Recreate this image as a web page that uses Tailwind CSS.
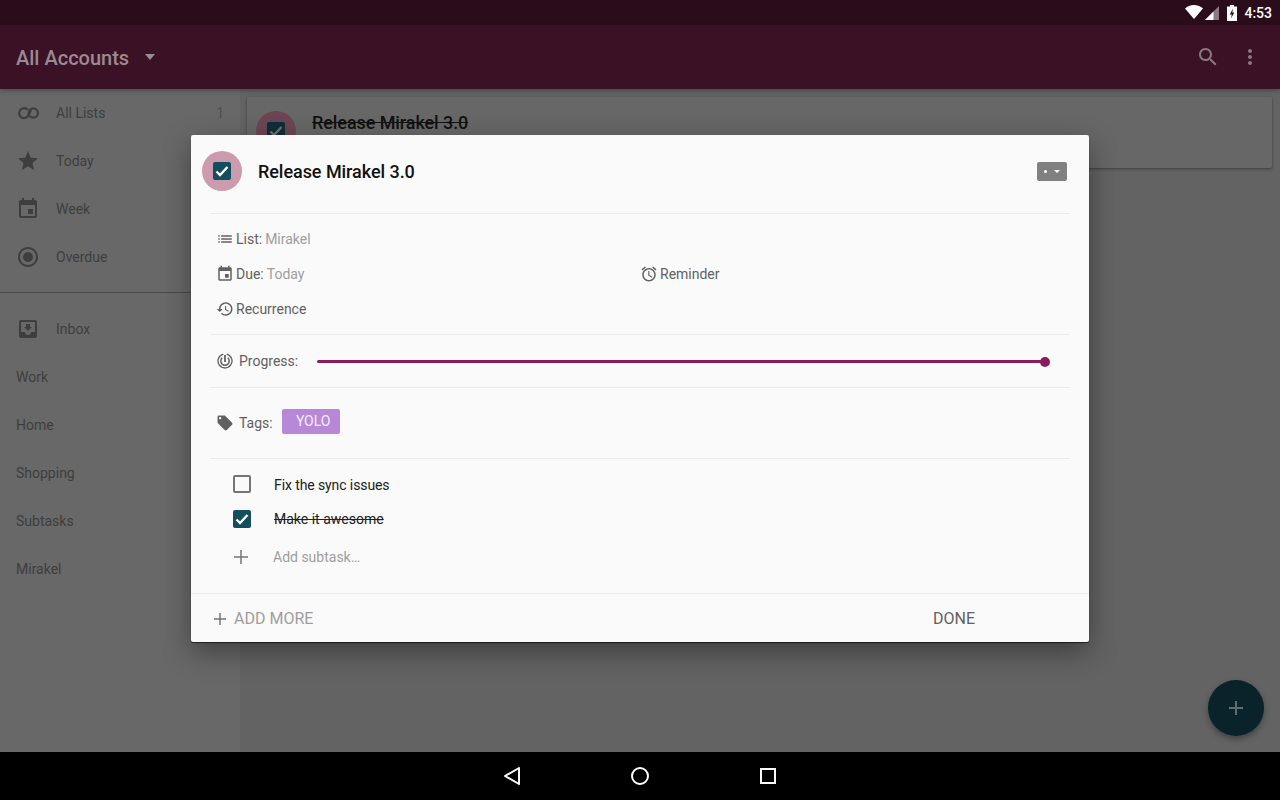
<!DOCTYPE html>
<html>
<head>
<meta charset="utf-8">
<script src="https://cdn.jsdelivr.net/npm/@tailwindcss/browser@4"></script>
</head>
<body class="font-['Roboto',sans-serif]">
<div class="relative w-[1280px] h-[800px] overflow-hidden flex flex-col bg-[#636363]">

  <!-- status bar -->
  <div class="h-[25px] bg-[#2b0c1b] flex items-center justify-end text-white">
    <svg class="w-[18px] h-[14px] mr-[2px] -mt-[1px]" viewBox="0 0 18 14"><path d="M0 3.500C2.300 1.300 5.500 0 9 0s6.700 1.300 9 3.500L9 14z" fill="#fff"/></svg>
    <svg class="w-[14px] h-[14px]" viewBox="0 0 14 14"><path d="M14 0v14H0z" fill="#8b7880"/><path d="M8.500 5.500V14H0z" fill="#fff"/></svg>
    <svg class="w-[10px] h-[16px] ml-[8px]" viewBox="0 0 10 16"><path d="M3 0h4v1.500h3V16H0V1.500h3z" fill="#fff"/><path d="M6 3.500L2.800 9.500h2L4 13.500l3.300-6h-2z" fill="#2b0c1b"/></svg>
    <span class="ml-[7px] mr-[8px] text-[14px] font-medium leading-none">4:53</span>
  </div>

  <!-- app bar -->
  <div class="h-[64px] bg-[#3b1225] flex items-center pl-4 pr-[18px] shadow-[0_2px_4px_rgba(0,0,0,0.25)] z-10">
    <span class="text-[20px] font-medium text-[#9c8a92] mt-[2px]">All Accounts</span>
    <svg class="w-[10px] h-[6px] ml-[16px] -mt-[1px]" viewBox="0 0 10 6"><path d="M0 0h10L5 6z" fill="#9c8a92"/></svg>
    <svg class="w-6 h-6 ml-auto mr-[18px]" viewBox="0 0 24 24"><path fill="#8b7880" d="M15.500 14h-.79l-.28-.27C15.410 12.590 16 11.110 16 9.500 16 5.910 13.090 3 9.500 3S3 5.910 3 9.500 5.910 16 9.500 16c1.610 0 3.090-.59 4.230-1.570l.27.28v.79l5 4.990L20.490 19l-4.990-5zm-6 0C7.010 14 5 11.990 5 9.500S7.010 5 9.500 5 14 7.010 14 9.500 11.990 14 9.500 14z"/></svg>
    <svg class="w-6 h-6" viewBox="0 0 24 24"><path fill="#8b7880" d="M12 8c1.100 0 2-.9 2-2s-.9-2-2-2-2 .9-2 2 .9 2 2 2zm0 2c-1.100 0-2 .9-2 2s.9 2 2 2 2-.9 2-2-.9-2-2-2zm0 6c-1.100 0-2 .9-2 2s.9 2 2 2 2-.9 2-2-.9-2-2-2z"/></svg>
  </div>

  <div class="flex-1 flex min-h-0">
    <!-- sidebar -->
    <div class="w-[240px] bg-[#686868] text-[14px] text-[#3e3e3e]">
      <div class="h-[48px] flex items-center pl-4 pr-4">
        <svg class="w-6 h-6 shrink-0 mr-4" viewBox="0 0 24 24" fill="none" stroke="#3e3e3e" stroke-width="2.200"><path d="M11.800 8.800A5 5 0 1 0 11.500 15.800L15 9"/><circle cx="17.300" cy="12" r="4.600"/></svg>
        <span>All Lists</span>
        <span class="ml-auto text-[#4f4f4f]">1</span>
      </div>
      <div class="h-[48px] flex items-center pl-4">
        <svg class="w-6 h-6 shrink-0 mr-4" viewBox="0 0 24 24"><path fill="#3e3e3e" d="M12 17.270L18.180 21l-1.640-7.030L22 9.240l-7.190-.61L12 2 9.190 8.630 2 9.240l5.460 4.730L5.820 21z"/></svg>
        <span>Today</span>
      </div>
      <div class="h-[48px] flex items-center pl-4">
        <svg class="w-6 h-6 shrink-0 mr-4" viewBox="0 0 24 24"><path fill="#3e3e3e" d="M17 12h-5v5h5v-5zM16 1v2H8V1H6v2H5c-1.110 0-1.990.9-1.990 2L3 19c0 1.100.89 2 2 2h14c1.100 0 2-.9 2-2V5c0-1.100-.9-2-2-2h-1V1h-2zm3 18H5V8h14v11z"/></svg>
        <span>Week</span>
      </div>
      <div class="h-[48px] flex items-center pl-4">
        <svg class="w-6 h-6 shrink-0 mr-4" viewBox="0 0 24 24"><path fill="#3e3e3e" d="M12 7c-2.760 0-5 2.240-5 5s2.240 5 5 5 5-2.240 5-5-2.240-5-5-5zm0-5C6.480 2 2 6.480 2 12s4.480 10 10 10 10-4.480 10-10S17.520 2 12 2zm0 18c-4.420 0-8-3.580-8-8s3.580-8 8-8 8 3.580 8 8-3.580 8-8 8z"/></svg>
        <span>Overdue</span>
      </div>
      <div class="h-px bg-[#4a4a4a] mt-[11px] mb-[12px]"></div>
      <div class="h-[48px] flex items-center pl-4">
        <svg class="w-6 h-6 shrink-0 mr-4" viewBox="0 0 24 24"><path fill="#3e3e3e" d="M19 3H5c-1.100 0-2 .9-2 2v14c0 1.100.9 2 2 2h14c1.100 0 2-.9 2-2V5c0-1.100-.9-2-2-2zm0 12h-4c0 1.660-1.350 3-3 3s-3-1.340-3-3H5V5h14v10zm-3-5h-2V7h-4v3H8l4 4 4-4z"/></svg>
        <span>Inbox</span>
      </div>
      <div class="h-[48px] flex items-center pl-4">Work</div>
      <div class="h-[48px] flex items-center pl-4">Home</div>
      <div class="h-[48px] flex items-center pl-4">Shopping</div>
      <div class="h-[48px] flex items-center pl-4">Subtasks</div>
      <div class="h-[48px] flex items-center pl-4">Mirakel</div>
    </div>

    <!-- task list behind the dialog -->
    <div class="flex-1 pl-[7px] pr-[8px] pt-[8px]">
      <div class="h-[71px] bg-[#676767] rounded-[2px] shadow-[0_1px_3px_rgba(0,0,0,0.4)] flex pl-[9px] pt-[14px]">
        <div class="w-10 h-10 rounded-full bg-[#6b4554] flex items-center justify-center">
          <svg class="w-[18px] h-[18px]" viewBox="0 0 18 18"><rect width="18" height="18" rx="2" fill="#0e2e38"/><path d="M3.500 9.500l3.500 3.500L14.500 5" fill="none" stroke="#707070" stroke-width="2.400"/></svg>
        </div>
        <span class="ml-4 mt-[3px] text-[18px] font-medium tracking-[-0.08px] text-[#111] line-through leading-[18px]">Release Mirakel 3.0</span>
      </div>
    </div>
  </div>

  <!-- nav bar -->
  <div class="h-[48px] bg-black flex items-center justify-center gap-[104px]">
    <svg class="w-6 h-6" viewBox="0 0 24 24"><path d="M19 4L5 12l14 8z" fill="none" stroke="#fff" stroke-width="2" stroke-linejoin="round"/></svg>
    <svg class="w-6 h-6" viewBox="0 0 24 24"><circle cx="12" cy="12" r="8" fill="none" stroke="#fff" stroke-width="2"/></svg>
    <svg class="w-6 h-6" viewBox="0 0 24 24"><rect x="5" y="5" width="14" height="14" fill="none" stroke="#fff" stroke-width="2"/></svg>
  </div>

  <!-- fab -->
  <div class="absolute left-[1208px] top-[680px] w-14 h-14 rounded-full bg-[#0a2229] shadow-[0_3px_6px_rgba(0,0,0,0.35)] flex items-center justify-center">
    <svg class="w-6 h-6" viewBox="0 0 24 24"><path d="M19 13h-6v6h-2v-6H5v-2h6V5h2v6h6z" fill="#5d6d70"/></svg>
  </div>

  <!-- dialog -->
  <div class="absolute left-[191px] top-[135px] w-[898px] h-[507px] bg-[#fafafa] rounded-[2px] shadow-[0_1px_1px_rgba(0,0,0,0.6),0_10px_28px_rgba(0,0,0,0.38)] flex flex-col text-[14px] text-[#616161]">

    <div class="h-[78px] flex items-center pl-[11px] pr-[22px] shrink-0">
      <div class="w-10 h-10 -mt-[6px] rounded-full bg-[#cc9bae] flex items-center justify-center">
        <svg class="w-[18px] h-[18px]" viewBox="0 0 18 18"><rect width="18" height="18" rx="2" fill="#134e5e"/><path d="M3.500 9.500l3.500 3.500L14.500 5" fill="none" stroke="#fff" stroke-width="2.400"/></svg>
      </div>
      <span class="ml-4 -mt-[6px] text-[18px] font-medium tracking-[-0.05px] text-[#111]">Release Mirakel 3.0</span>
      <div class="ml-auto -mt-[6px] w-[30px] h-[19px] bg-[#808080] rounded-[2px] flex items-center justify-center gap-[7px]">
        <span class="w-[3px] h-[3px] rounded-full bg-white"></span>
        <svg class="w-[6px] h-[3px]" viewBox="0 0 6 3"><path d="M0 0h6L3 3z" fill="#fff"/></svg>
      </div>
    </div>

    <div class="mx-[19px] h-[121px] border-t border-[#ececec] pl-[6px] pt-[8px] shrink-0">
      <div class="h-[35px] flex items-center">
        <svg class="w-[18px] h-[18px] mr-[2px] -mt-[2px]" viewBox="0 0 24 24"><path fill="#616161" d="M3 13h2v-2H3v2zm0 4h2v-2H3v2zm0-8h2V7H3v2zm4 4h14v-2H7v2zm0 4h14v-2H7v2zM7 7v2h14V7H7z"/></svg>
        <span>List:</span><span class="ml-[3px] text-[#9e9e9e]">Mirakel</span>
      </div>
      <div class="h-[35px] flex items-center">
        <div class="w-[424px] flex items-center">
          <svg class="w-[18px] h-[18px] mr-[2px] -mt-[2px]" viewBox="0 0 24 24"><path fill="#616161" d="M17 12h-5v5h5v-5zM16 1v2H8V1H6v2H5c-1.110 0-1.990.9-1.990 2L3 19c0 1.100.89 2 2 2h14c1.100 0 2-.9 2-2V5c0-1.100-.9-2-2-2h-1V1h-2zm3 18H5V8h14v11z"/></svg>
          <span>Due:</span><span class="ml-[3px] text-[#9e9e9e]">Today</span>
        </div>
        <svg class="w-[18px] h-[18px] mr-[2px] -mt-[2px]" viewBox="0 0 24 24"><path fill="#616161" d="M22 5.720l-4.600-3.860-1.290 1.530 4.600 3.860L22 5.720zM7.880 3.390L6.600 1.860 2 5.710l1.290 1.530 4.590-3.850zM12.500 8H11v6l4.750 2.850.75-1.230-4-2.370V8zM12 4c-4.970 0-9 4.030-9 9s4.020 9 9 9c4.970 0 9-4.030 9-9s-4.030-9-9-9zm0 16c-3.870 0-7-3.130-7-7s3.130-7 7-7 7 3.130 7 7-3.130 7-7 7z"/></svg>
        <span>Reminder</span>
      </div>
      <div class="h-[35px] flex items-center">
        <svg class="w-[18px] h-[18px] mr-[2px] -mt-[2px]" viewBox="0 0 24 24"><path fill="#616161" d="M13 3c-4.970 0-9 4.030-9 9H1l3.890 3.890.07.14L9 12H6c0-3.870 3.130-7 7-7s7 3.130 7 7-3.130 7-7 7c-1.930 0-3.680-.79-4.940-2.060l-1.420 1.420C8.270 19.990 10.510 21 13 21c4.970 0 9-4.030 9-9s-4.030-9-9-9zm-1 5v5l4.280 2.540.72-1.210-3.500-2.080V8H12z"/></svg>
        <span>Recurrence</span>
      </div>
    </div>

    <div class="mx-[19px] h-[53px] border-t border-[#ececec] flex items-center pl-[7px] shrink-0">
      <svg class="w-[16px] h-[16px] mr-[6px]" viewBox="0 0 16 16" fill="none" stroke="#616161"><path stroke-width="1.300" d="M6.300 1.200a7 7 0 1 0 3.400 0"/><path stroke-width="1.500" d="M5.300 4.800a4.200 4.200 0 1 0 5.400 0"/><path stroke-width="1.800" d="M8 2v7"/></svg>
      <span>Progress:</span>
      <div class="relative ml-[19px] mt-[1px] w-[728px] h-[3px] rounded-full bg-[#8a1c5c]">
        <span class="absolute -right-[5px] -top-[3.500px] w-[10px] h-[10px] rounded-full bg-[#8a1c5c]"></span>
      </div>
    </div>

    <div class="mx-[19px] h-[71px] border-t border-[#ececec] flex items-center pl-[6px] shrink-0">
      <svg class="w-[18px] h-[18px] mr-[5px]" viewBox="0 0 24 24"><path fill="#616161" d="M21.410 11.580l-9-9C12.050 2.220 11.550 2 11 2H4c-1.100 0-2 .9-2 2v7c0 .55.22 1.050.59 1.420l9 9c.36.36.86.58 1.410.58.55 0 1.050-.22 1.410-.59l7-7c.37-.36.59-.86.59-1.410 0-.55-.23-1.060-.59-1.420zM5.500 7C4.670 7 4 6.330 4 5.500S4.670 4 5.500 4 7 4.670 7 5.500 6.330 7 5.500 7z"/></svg>
      <span>Tags:</span>
      <span class="ml-[9px] -mt-[4px] w-[58px] h-[25px] pl-[5px] bg-[#b888d8] rounded-[2px] flex items-center justify-center text-[#f7ecfb]">YOLO</span>
    </div>

    <div class="mx-[19px] h-[135px] border-t border-[#ececec] shrink-0 text-[#212121]">
      <div class="h-[50px] flex items-center pl-[23px] pt-[2px]">
        <span class="w-[18px] h-[18px] -mt-[2px] rounded-[2px] border-2 border-[#757575]"></span>
        <span class="ml-[23px] tracking-[-0.1px]">Fix the sync issues</span>
      </div>
      <div class="h-[20px] flex items-center pl-[23px]">
        <svg class="w-[18px] h-[18px]" viewBox="0 0 18 18"><rect width="18" height="18" rx="2" fill="#134e5e"/><path d="M3.500 9.500l3.500 3.500L14.500 5" fill="none" stroke="#fff" stroke-width="2.400"/></svg>
        <span class="ml-[23px] mt-[1px] line-through">Make it awesome</span>
      </div>
      <div class="h-[56px] flex items-center pl-[19px] text-[#9e9e9e]">
        <svg class="w-6 h-6" viewBox="0 0 24 24"><path d="M12 5v14M5 12h14" fill="none" stroke="#757575" stroke-width="1.500"/></svg>
        <span class="ml-[20px]">Add subtask…</span>
      </div>
    </div>

    <div class="flex-1 border-t border-[#ececec] flex items-center pl-[21px] pr-[114px] pt-[1px] text-[16px]">
      <svg class="w-4 h-4" viewBox="0 0 16 16"><path d="M8 2v12M2 8h12" fill="none" stroke="#757575" stroke-width="1.500"/></svg>
      <span class="ml-[6px] text-[#9e9e9e]">ADD MORE</span>
      <span class="ml-auto text-[#616161]">DONE</span>
    </div>
  </div>
</div>
</body>
</html>
